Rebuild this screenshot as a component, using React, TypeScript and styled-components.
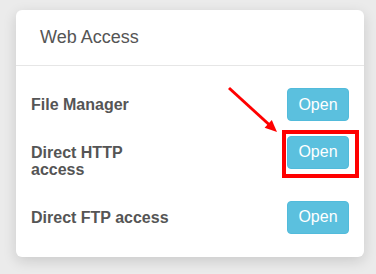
import * as React from "react";
import styled, { createGlobalStyle } from "styled-components";

const GlobalStyle = createGlobalStyle`
  html, body {
    margin: 0;
    padding: 0;
    background: #ebebeb;
    font-family: "Liberation Sans", Arial, sans-serif;
  }
`;

const Page = styled.div`
  padding: 10px 12px 18px 16px;
`;

const Card = styled.div`
  width: 348px;
  background: #fff;
  border-radius: 6px;
  box-shadow: 0 4px 14px rgba(0, 0, 0, 0.14);
`;

const Header = styled.div`
  display: flex;
  align-items: center;
  height: 55px;
  padding: 0 24px;
  border-bottom: 1px solid #e6e6e6;
`;

const Title = styled.h3`
  margin: 0;
  font-size: 18px;
  font-weight: normal;
  color: #555;
`;

const Body = styled.div`
  display: flex;
  flex-direction: column;
  gap: 14px;
  padding: 22px 15px 23px;
`;

const Row = styled.div`
  display: flex;
  justify-content: space-between;
  align-items: flex-start;
`;

const Label = styled.div`
  max-width: 144px;
  padding: 8px 0;
  font-size: 16px;
  line-height: 17.5px;
  font-weight: bold;
  color: #555;
`;

const ButtonSlot = styled.div`
  position: relative;
`;

const OpenButton = styled.button`
  display: block;
  width: 62px;
  height: 33px;
  padding: 0;
  background: #5bc0de;
  border: 1px solid #52bbdb;
  border-radius: 4px;
  color: #fff;
  font-family: "Liberation Sans", Arial, sans-serif;
  font-size: 16px;
  cursor: pointer;
`;

const Highlight = styled.div`
  position: absolute;
  left: -5px;
  top: -6px;
  width: 77px;
  height: 48px;
  box-sizing: border-box;
  border: 4px solid #ff0000;
  pointer-events: none;
`;

const Arrow = styled.svg`
  position: absolute;
  left: -60px;
  top: -50px;
  overflow: visible;
  pointer-events: none;
`;

const items = [
  { label: "File Manager", marked: false },
  { label: "Direct HTTP access", marked: true },
  { label: "Direct FTP access", marked: false },
];

const App: React.FC = () => {
  return (
    <Page>
      <GlobalStyle />
      <Card>
        <Header>
          <Title>Web Access</Title>
        </Header>
        <Body>
          {items.map((item) => (
            <Row key={item.label}>
              <Label>{item.label}</Label>
              <ButtonSlot>
                <OpenButton>Open</OpenButton>
                {item.marked && (
                  <>
                    <Highlight />
                    <Arrow width="56" height="50" viewBox="0 0 56 50">
                      <line x1="2" y1="2" x2="42" y2="38.5" stroke="#ff0000" strokeWidth="3" />
                      <polygon points="50,46 37.6,41.8 44.8,34" fill="#ff0000" />
                    </Arrow>
                  </>
                )}
              </ButtonSlot>
            </Row>
          ))}
        </Body>
      </Card>
    </Page>
  );
};

export default App;
